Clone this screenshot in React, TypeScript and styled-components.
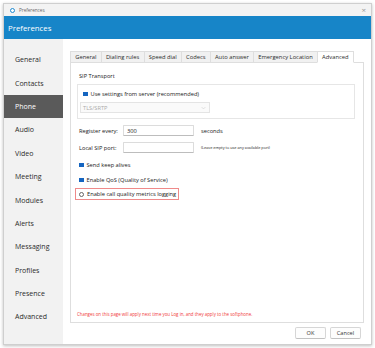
import React, { useState } from "react";
import styled, { createGlobalStyle } from "styled-components";

const GlobalStyle = createGlobalStyle`
  html, body {
    margin: 0;
    padding: 0;
    background: #ffffff;
  }
  body {
    font-family: "Open Sans", "Noto Sans", "Liberation Sans", sans-serif;
    color: #1a1a1a;
  }
`;

const sections = [
  "General",
  "Contacts",
  "Phone",
  "Audio",
  "Video",
  "Meeting",
  "Modules",
  "Alerts",
  "Messaging",
  "Profiles",
  "Presence",
  "Advanced",
];

const tabs = [
  "General",
  "Dialing rules",
  "Speed dial",
  "Codecs",
  "Auto answer",
  "Emergency Location",
  "Advanced",
];

const App = () => {
  const [section, setSection] = useState("Phone");
  const [tab, setTab] = useState("Advanced");
  const [useServer, setUseServer] = useState(true);
  const [keepAlive, setKeepAlive] = useState(true);
  const [qos, setQos] = useState(true);
  const [metrics, setMetrics] = useState(false);

  return (
    <>
      <GlobalStyle />
      <Window>
        <TitleBar>
          <TitleIcon />
          <TitleText>Preferences</TitleText>
          <CloseButton>×</CloseButton>
        </TitleBar>
        <Header>Preferences</Header>
        <Body>
          <Sidebar>
            {sections.map((s) => (
              <NavItem key={s} active={s === section} onClick={() => setSection(s)}>
                {s}
              </NavItem>
            ))}
          </Sidebar>
          <Main>
            <TabRow>
              {tabs.map((t) => (
                <Tab key={t} active={t === tab} onClick={() => setTab(t)}>
                  {t}
                </Tab>
              ))}
            </TabRow>
            <Panel>
              <SectionLabel>SIP Transport</SectionLabel>
              <GroupBox>
                <CheckRow onClick={() => setUseServer(!useServer)}>
                  <Check checked={useServer} />
                  Use settings from server (recommended)
                </CheckRow>
                <Select>
                  <span>TLS/SRTP</span>
                  <Chevron viewBox="0 0 8 5">
                    <path d="M1 1 L4 4 L7 1" fill="none" stroke="#c4c4c4" strokeWidth="0.8" />
                  </Chevron>
                </Select>
              </GroupBox>
              <FieldRow>
                <FieldLabel>Register every:</FieldLabel>
                <TextInput defaultValue="300" />
                <FieldHint>seconds</FieldHint>
              </FieldRow>
              <FieldRow>
                <FieldLabel>Local SIP port:</FieldLabel>
                <TextInput defaultValue="" />
                <SmallHint>(Leave empty to use any available port)</SmallHint>
              </FieldRow>
              <OptionRow onClick={() => setKeepAlive(!keepAlive)}>
                <Check checked={keepAlive} />
                Send keep alives
              </OptionRow>
              <OptionRow onClick={() => setQos(!qos)}>
                <Check checked={qos} />
                Enable QoS (Quality of Service)
              </OptionRow>
              <Highlight onClick={() => setMetrics(!metrics)}>
                <Radio checked={metrics} />
                Enable call quality metrics logging
              </Highlight>
              <Spacer />
              <Notice>
                Changes on this page will apply next time you Log in, and they apply to the softphone.
              </Notice>
            </Panel>
            <Footer>
              <Button>OK</Button>
              <Button>Cancel</Button>
            </Footer>
          </Main>
        </Body>
      </Window>
    </>
  );
};

const Window = styled.div`
  margin: 3px;
  width: 369px;
  height: 342px;
  box-sizing: border-box;
  border: 1px solid #cfcfcf;
  box-shadow: 0 1px 3px rgba(0, 0, 0, 0.25);
  display: flex;
  flex-direction: column;
  background: #ffffff;
  overflow: hidden;
`;

const TitleBar = styled.div`
  height: 12px;
  flex-shrink: 0;
  background: #f3f3f3;
  display: flex;
  align-items: center;
  padding: 0 5px 0 6px;
`;

const TitleIcon = styled.span`
  width: 5px;
  height: 5px;
  border-radius: 50%;
  background: #ffffff;
  border: 1.5px solid #1f8ad0;
  box-sizing: border-box;
`;

const TitleText = styled.span`
  margin-left: 4px;
  font-size: 4.6px;
  color: #666;
  flex: 1;
`;

const CloseButton = styled.span`
  font-size: 8px;
  color: #999;
  line-height: 1;
`;

const Header = styled.div`
  height: 23px;
  flex-shrink: 0;
  background: #1785c8;
  color: #ffffff;
  font-size: 7.8px;
  display: flex;
  align-items: center;
  padding-left: 4px;
`;

const Body = styled.div`
  flex: 1;
  display: flex;
  min-height: 0;
`;

const Sidebar = styled.div`
  width: 59px;
  flex-shrink: 0;
  background: #f2f2f2;
  padding-top: 9px;
  display: flex;
  flex-direction: column;
`;

const NavItem = styled.div<{ active?: boolean }>`
  height: 23.4px;
  display: flex;
  align-items: center;
  padding-left: 11px;
  font-size: 7px;
  color: ${(p) => (p.active ? "#ffffff" : "#2b2b2b")};
  background: ${(p) => (p.active ? "#5a5a5a" : "transparent")};
  cursor: pointer;
`;

const Main = styled.div`
  flex: 1;
  display: flex;
  flex-direction: column;
  padding: 12px 7px 0 7px;
  min-width: 0;
`;

const TabRow = styled.div`
  display: flex;
  height: 11px;
  flex-shrink: 0;
`;

const Tab = styled.div<{ active?: boolean }>`
  display: flex;
  align-items: center;
  padding: 0 4.2px;
  font-size: 5.8px;
  color: #2b2b2b;
  background: ${(p) => (p.active ? "#ffffff" : "#f1f1f1")};
  border: 1px solid #dedede;
  border-bottom: ${(p) => (p.active ? "1px solid #ffffff" : "1px solid #dedede")};
  margin-right: -1px;
  margin-bottom: -1px;
  position: relative;
  z-index: ${(p) => (p.active ? 1 : 0)};
  white-space: nowrap;
  cursor: pointer;
`;

const Panel = styled.div`
  height: 261px;
  flex-shrink: 0;
  box-sizing: border-box;
  border: 1px solid #dedede;
  padding: 9px 8px 4px 6px;
  display: flex;
  flex-direction: column;
  font-size: 5.7px;
`;

const SectionLabel = styled.div`
  padding-left: 2px;
  height: 8px;
  display: flex;
  align-items: center;
`;

const GroupBox = styled.div`
  margin-top: 4px;
  height: 35px;
  box-sizing: border-box;
  border: 1px solid #e6e6e6;
  padding: 5px 3px 0 2px;
  display: flex;
  flex-direction: column;
  gap: 4px;
`;

const CheckRow = styled.div`
  display: flex;
  align-items: center;
  gap: 3px;
  height: 8px;
  padding-left: 3px;
  cursor: pointer;
`;

const Check = styled.span<{ checked?: boolean }>`
  width: 4.5px;
  height: 4.5px;
  box-sizing: border-box;
  border: 1px solid ${(p) => (p.checked ? "#1565c0" : "#777")};
  background: ${(p) => (p.checked ? "#1565c0" : "#fff")};
  flex-shrink: 0;
`;

const Radio = styled.span<{ checked?: boolean }>`
  width: 5px;
  height: 5px;
  box-sizing: border-box;
  border-radius: 50%;
  border: 0.8px solid #666;
  background: ${(p) => (p.checked ? "#1565c0" : "#fff")};
  flex-shrink: 0;
`;

const Select = styled.div`
  width: 130px;
  height: 11px;
  box-sizing: border-box;
  border: 1px solid #e4e4e4;
  background: #fafafa;
  color: #aaa;
  display: flex;
  align-items: center;
  justify-content: space-between;
  padding: 0 3px 0 2px;
`;

const Chevron = styled.svg`
  width: 5px;
  height: 4px;
`;

const FieldRow = styled.div`
  display: flex;
  align-items: center;
  height: 11px;
  margin-top: 6px;
  padding-left: 2px;
`;

const FieldLabel = styled.span`
  width: 44px;
  flex-shrink: 0;
`;

const TextInput = styled.input`
  width: 71px;
  height: 11px;
  box-sizing: border-box;
  border: 1px solid #dcdcdc;
  border-bottom-color: #bdbdbd;
  border-radius: 1px;
  padding: 0 3px;
  font-family: inherit;
  font-size: 5.7px;
  color: #1a1a1a;
  outline: none;
`;

const FieldHint = styled.span`
  margin-left: 7px;
`;

const SmallHint = styled.span`
  margin-left: 7px;
  font-size: 3.8px;
`;

const OptionRow = styled.div`
  display: flex;
  align-items: center;
  gap: 3px;
  height: 8px;
  margin-top: 8px;
  padding-left: 2px;
  cursor: pointer;
  & + & {
    margin-top: 7px;
  }
`;

const Highlight = styled.div`
  align-self: flex-start;
  margin-top: 4px;
  margin-left: -2px;
  height: 12px;
  box-sizing: border-box;
  border: 1px solid #ef8a8a;
  display: flex;
  align-items: center;
  gap: 3px;
  padding: 0 2px 0 3px;
  cursor: pointer;
`;

const Spacer = styled.div`
  flex: 1;
`;

const Notice = styled.div`
  font-size: 4.4px;
  color: #f03a3a;
  height: 7px;
`;

const Footer = styled.div`
  flex: 1;
  display: flex;
  justify-content: flex-end;
  align-items: center;
  gap: 4px;
  padding-right: 3px;
  padding-bottom: 1px;
`;

const Button = styled.button`
  width: 31px;
  height: 12px;
  box-sizing: border-box;
  border: 1px solid #d6d6d6;
  border-bottom-color: #c2c2c2;
  border-radius: 2px;
  background: #fdfdfd;
  font-family: inherit;
  font-size: 5.6px;
  color: #333;
  padding: 0;
  cursor: pointer;
`;

export default App;
